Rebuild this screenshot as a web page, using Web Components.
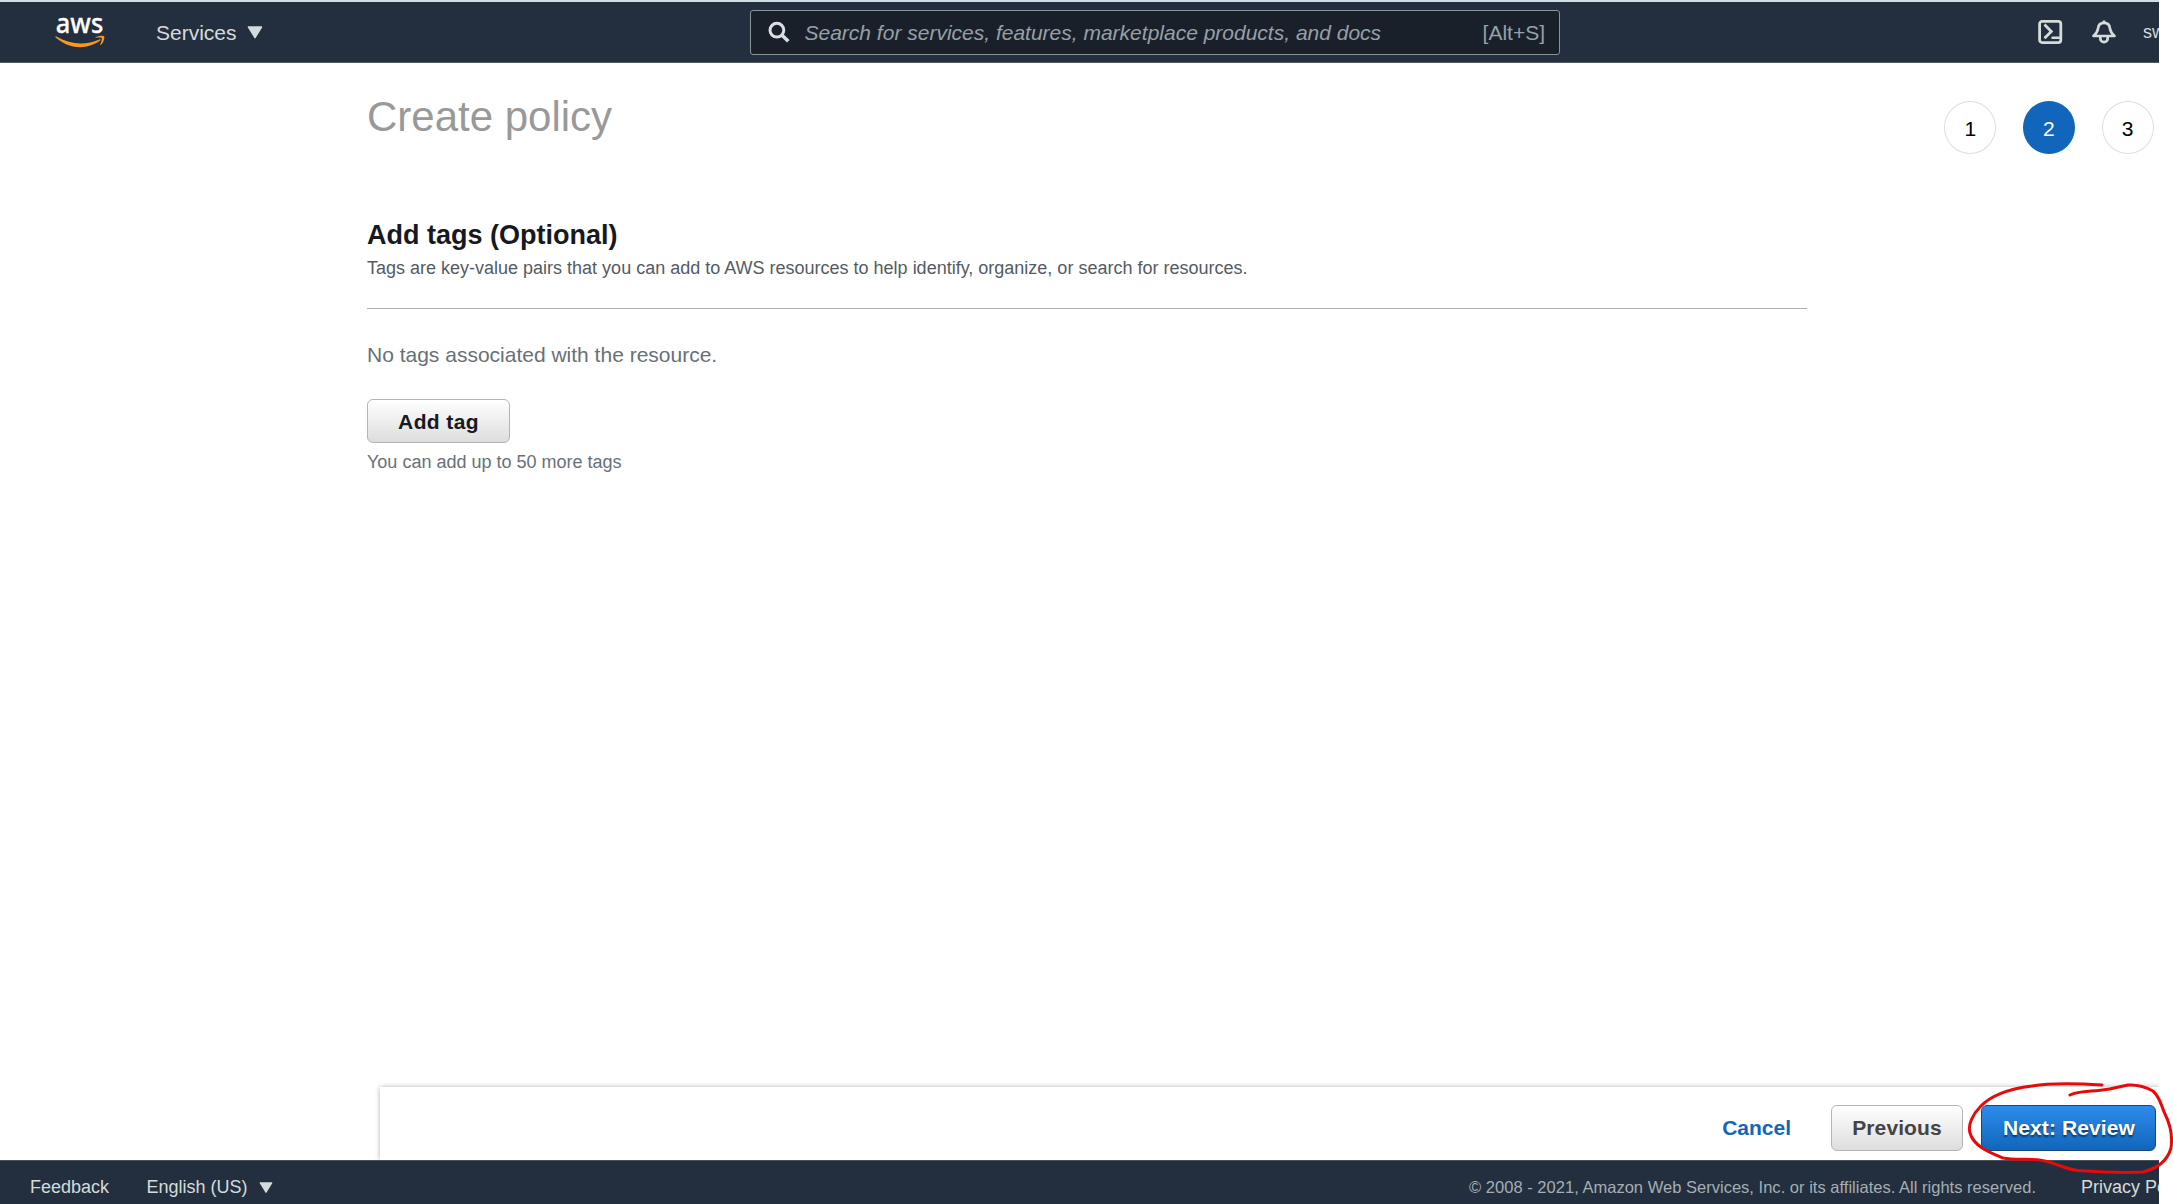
<!DOCTYPE html>
<html lang="en">
<head>
<meta charset="utf-8">
<title>Create policy</title>
<style>
html,body{margin:0;height:100%;background:#fff;overflow:hidden}
body{font-family:"Liberation Sans",Arial,sans-serif;color:#16191f}
</style>
</head>
<body>
<policy-app></policy-app>
<script>
const define = (name, html) => customElements.define(name, class extends HTMLElement {
  constructor() {
    super();
    const t = document.createElement('template');
    t.innerHTML = html;
    this.attachShadow({ mode: 'open' }).append(t.content.cloneNode(true));
  }
});

define('aws-logo', `<style>:host{display:block;width:50px;height:36px}svg{display:block;overflow:visible}</style>
<svg width="50" height="36" viewBox="0 0 50 36"><text x=".8" y="19" textLength="47.500" lengthAdjust="spacingAndGlyphs" font-family="Noto Sans,Open Sans,sans-serif" font-weight="500" font-size="27.500" fill="#fff" stroke="#fff" stroke-width=".3">aws</text>
<path d="M.3 22.700c.5-.7 1-.3 1.700.1 14 8.200 29 8.600 42.300 2.600 1-.5 1.700.4.800 1.200-5 4-12.500 6.600-20 6.600-10 0-18-4-24.400-9.600z" fill="#f8981d"/><path d="M40.500 23.200c2.200-1.600 7.800-2 8.600-1 .8 1.200-.4 6.200-3.100 8.600-.6.500-1 .2-.8-.3.700-1.800 2.100-5.500 1.500-6.300-.7-.9-4-.6-5.700-.4-.6.100-.8-.3-.5-.6z" fill="#f8981d"/></svg>`);

define('caret-icon', `<style>:host{display:block;width:16px}svg{display:block;width:100%}</style>
<svg viewBox="0 0 16 13"><path d="M1.500 1h13L8 11.700z" fill="#d5dbdb" stroke="#d5dbdb" stroke-width="1.500" stroke-linejoin="round"/></svg>`);

define('search-box', `<style>
:host{display:flex;align-items:center;box-sizing:border-box;width:810px;height:45px;border:1px solid #879596;border-radius:3px;background:#1a2029;padding:0 14px 0 17px;color:#95a0a8;font-size:21px;line-height:24px}
svg{margin-right:14.500px}i{flex:1}span,i{white-space:nowrap;padding-top:2px}
</style><svg width="22" height="22" viewBox="0 0 22 22" fill="none" stroke="#d9dfe2"><circle cx="8.900" cy="9.200" r="6.900" stroke-width="3"/><path d="M13.800 14l6.500 6.300" stroke-width="3.500"/></svg><i>Search for services, features, marketplace products, and docs</i><span>[Alt+S]</span>`);

define('top-bar', `<style>
:host{display:flex;align-items:center;box-sizing:border-box;width:2159px;height:63px;border-top:2px solid #cfdde6;border-bottom:1px solid #535b65;background:#232f3e;padding-left:55px;color:#d5dbdb;font-size:21px;line-height:24px;overflow:hidden}
aws-logo,.sv,caret-icon,search-box,.icons,.icons>*{flex:none}
aws-logo{margin-right:51px}.sv{width:81px;margin-right:10px;padding-top:2px}
search-box{margin-left:487px}
.icons{display:flex;align-items:center;margin-left:478px}
.icons svg{display:block}.bell{margin:0 25px 0 28px}
.user{font-size:18px;line-height:20px;white-space:nowrap}
</style><aws-logo></aws-logo><span class="sv">Services</span><caret-icon></caret-icon><search-box></search-box>
<div class="icons">
<svg width="26" height="26" viewBox="0 0 26 26" fill="none" stroke="#d5dbdb" stroke-width="2.800"><rect x="1.600" y="2.400" width="21.200" height="21.200" rx="2.500"/><path d="M6.500 5.600l6.800 6.800-6.800 6.800"/><path d="M14.500 18.800H21" stroke-linecap="round" stroke-width="2.500"/></svg>
<svg class="bell" width="26" height="26" viewBox="0 0 26 26" fill="none" stroke="#d5dbdb" stroke-width="2.700" stroke-linejoin="round"><path d="M12 1.500v2M1.500 17h21c-4.300-3.600-4-4.700-4.600-8C17.400 5.600 15 3.800 12 3.800S6.600 5.600 6.100 9c-.6 3.300-.3 4.400-4.600 8z"/><path d="M8.300 18v1.500c0 2 1.700 3.600 3.700 3.600s3.700-1.600 3.700-3.600V18"/></svg>
<span class="user">sw</span></div>`);

define('step-dot', `<style>
:host{display:flex;align-items:center;justify-content:center;box-sizing:border-box;width:52px;height:53px;border:1px solid #dedede;border-radius:50%;font-size:21px;line-height:24px;color:#000;padding-top:2px}
:host([active]){background:#1166bb;border-color:#1166bb;color:#fff}
</style><slot></slot>`);

define('ui-button', `<style>
:host{display:flex;align-items:center;justify-content:center;box-sizing:border-box;border:1px solid #b3b3b3;border-radius:6px;background:linear-gradient(#fff,#ddd);font-weight:700;font-size:21px;line-height:24px;letter-spacing:.375px;color:#16191f;white-space:nowrap}
:host([kind=previous]){color:#444;letter-spacing:.1px}
:host([kind=primary]){color:#fff;background:linear-gradient(#2e8bec,#1166bb);border-color:#14497f;letter-spacing:.12px;text-shadow:0 2px 2px rgba(0,0,0,.55);padding-left:1px}
</style><slot></slot>`);

define('tag-section', `<style>
:host{display:block;width:1440px}
h2{margin:0;font-size:27px;line-height:32px}
.sub{margin:6px 0 0;font-size:18px;line-height:22px;color:#545b64}
hr{border:0;border-top:1px solid #aab0b3;margin:29px 0 0}
.none{margin:33px 0 0;font-size:21px;line-height:26px;color:#687078}
ui-button{width:143px;height:44px;margin-top:31px;padding-top:1px}
.hint{margin:8px 0 0;font-size:18px;line-height:22px;color:#687078}
</style><h2>Add tags (Optional)</h2><p class="sub">Tags are key-value pairs that you can add to AWS resources to help identify, organize, or search for resources.</p><hr>
<p class="none">No tags associated with the resource.</p><ui-button>Add tag</ui-button><p class="hint">You can add up to 50 more tags</p>`);

define('action-bar', `<style>
:host{display:flex;align-items:center;justify-content:flex-end;box-sizing:border-box;width:1779px;height:73px;margin-left:380px;background:#fff;box-shadow:0 0 5px rgba(0,0,0,.3);clip-path:inset(-6px 0 0 -6px);padding:9px 3px 0 0}
a{color:#1166bb;font-weight:700;font-size:21px;line-height:24px;margin-right:40px}
.p{width:132px;height:46px;margin-right:18px}.n{width:175px;height:46px}
</style><a>Cancel</a><ui-button class="p" kind="previous">Previous</ui-button><ui-button class="n" kind="primary">Next: Review</ui-button>`);

define('bottom-bar', `<style>
:host{display:flex;align-items:center;box-sizing:border-box;width:2159px;height:44px;border-top:1px solid #46505c;background:#232f3e;color:#d5dbdb;font-size:18px;line-height:22px;padding:8px 0 0 30px;overflow:hidden;white-space:nowrap}
span,caret-icon{flex:none}
.lang{margin:0 11px 0 37.500px}caret-icon{width:14px;padding-top:2px}
.copy{margin-left:auto;font-size:16.5px;letter-spacing:.018px;color:#a5aeb5}.priv{width:78px;margin-left:45px}
</style><span>Feedback</span><span class="lang">English (US)</span><caret-icon></caret-icon><span class="copy">© 2008 - 2021, Amazon Web Services, Inc. or its affiliates. All rights reserved.</span><span class="priv">Privacy Policy</span>`);

define('red-circle', `<style>:host{position:absolute;left:1960px;top:1070px;width:213px;height:110px;pointer-events:none}svg{display:block}</style>
<svg width="213" height="110" viewBox="1960 1070 213 110" fill="none" stroke="#e60a0a" stroke-width="3" stroke-linecap="round" stroke-linejoin="round"><path d="M2102 1085C2080 1083.500 2052 1082.500 2032 1086C2008 1089 1990 1096 1980 1107C1973 1114 1967.500 1125 1970 1133C1974 1147 1991 1153 2003 1158C2017 1161 2035 1157 2049 1162C2062 1166 2066 1169 2078 1170.500C2100 1172 2124 1173 2143 1172C2159 1168 2168 1159 2171 1148C2173 1134 2169 1122 2165 1114C2161 1105 2160 1097 2153 1091C2144 1086 2136 1084.500 2128 1085C2113 1088 2104 1091 2091 1091C2082 1092 2076 1092 2070 1095"/></svg>`);

define('policy-app', `<style>
:host{display:flex;flex-direction:column;height:1204px;width:2173px;overflow:hidden;position:relative}
main{flex:1;padding:38px 0 0 367px}
.head{display:flex;justify-content:space-between;width:1786.500px;height:115px}
h1{margin:-8px 0 0;font-weight:400;font-size:42px;line-height:48px;color:#999}
.steps{display:flex;gap:26.600px}
tag-section{margin-top:3px}
</style><top-bar></top-bar><main><div class="head"><h1>Create policy</h1><div class="steps"><step-dot>1</step-dot><step-dot active>2</step-dot><step-dot>3</step-dot></div></div><tag-section></tag-section></main><action-bar></action-bar><bottom-bar></bottom-bar><red-circle></red-circle>`);
</script>
</body>
</html>
